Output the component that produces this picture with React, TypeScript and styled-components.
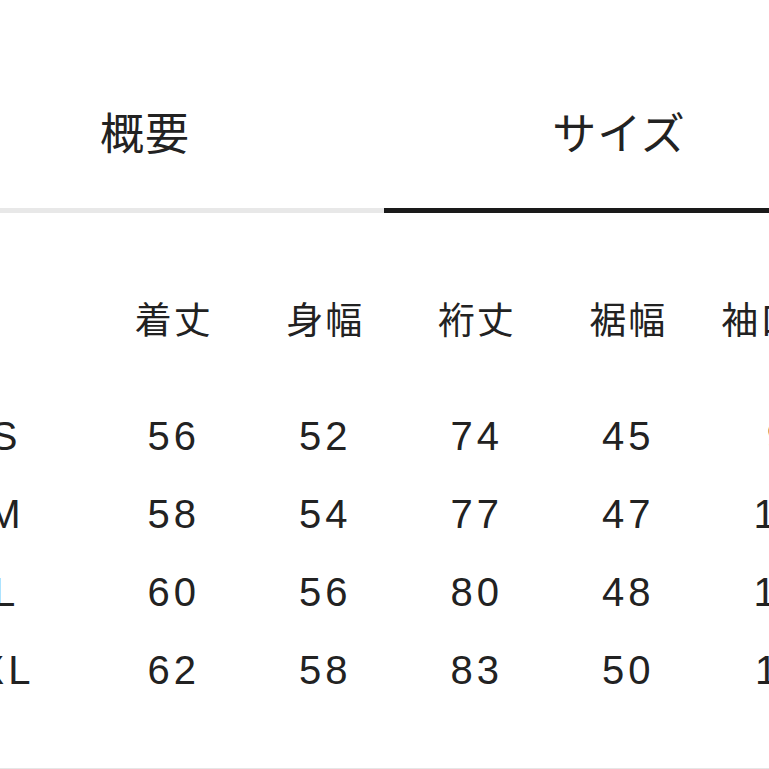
import { Fragment } from 'react';
import styled, { createGlobalStyle } from 'styled-components';

const GlobalStyle = createGlobalStyle`
  html, body {
    margin: 0;
    padding: 0;
    background: #ffffff;
  }
`;

const Frame = styled.div`
  width: 769px;
  height: 769px;
  box-sizing: border-box;
  overflow: hidden;
  border-bottom: 1px solid #e6e6e6;
  background: #ffffff;
  color: #222222;
  font-family: "Liberation Sans", "Noto Sans CJK JP", sans-serif;
`;

// the screenshot is a crop of a wider page, so the content starts left of the frame
const Content = styled.div`
  width: 960px;
  margin-left: -86px;
`;

const TabBar = styled.div`
  display: grid;
  grid-template-columns: 470px 470px;
`;

const Tab = styled.div<{ $active?: boolean }>`
  height: 208px;
  display: flex;
  justify-content: center;
  border-bottom: 5px solid ${(p) => (p.$active ? '#1a1a1a' : '#e8e8e8')};
`;

const TabLabel = styled.span<{ $shift?: number }>`
  margin-top: 109px;
  margin-right: ${(p) => p.$shift ?? 0}px;
  font-family: "Noto Sans CJK JP", sans-serif;
  font-size: 44px;
  line-height: 44px;
  letter-spacing: 1px;
  color: #222222;
`;

const Table = styled.div`
  margin-top: 66px;
  display: grid;
  grid-template-columns: 184px repeat(5, 151.5px);
`;

const HeadCell = styled.div`
  height: 78px;
  margin-bottom: 40px;
  display: flex;
  align-items: center;
  justify-content: center;
  font-family: "Noto Sans CJK JP", sans-serif;
  font-size: 37px;
  letter-spacing: 2px;
  white-space: nowrap;
`;

const Cell = styled.div`
  height: 78px;
  display: flex;
  align-items: center;
  justify-content: center;
  font-family: "Liberation Sans", sans-serif;
  font-size: 40px;
  letter-spacing: 4px;
  white-space: nowrap;
`;

const columns = ['着丈', '身幅', '裄丈', '裾幅', '袖口幅'];

const rows: { size: string; values: number[] }[] = [
  { size: 'S', values: [56, 52, 74, 45, 9] },
  { size: 'M', values: [58, 54, 77, 47, 10] },
  { size: 'L', values: [60, 56, 80, 48, 10] },
  { size: 'XL', values: [62, 58, 83, 50, 11] },
];

export default function App() {
  return (
    <Frame>
      <GlobalStyle />
      <Content>
        <TabBar>
          <Tab>
            <TabLabel $shift={8}>概要</TabLabel>
          </Tab>
          <Tab $active>
            <TabLabel>サイズ</TabLabel>
          </Tab>
        </TabBar>

        <Table>
          <HeadCell />
          {columns.map((c) => (
            <HeadCell key={c}>{c}</HeadCell>
          ))}
          {rows.map((r) => (
            <Fragment key={r.size}>
              <Cell>{r.size}</Cell>
              {r.values.map((v, i) => (
                <Cell key={i}>{v}</Cell>
              ))}
            </Fragment>
          ))}
        </Table>
      </Content>
    </Frame>
  );
}
